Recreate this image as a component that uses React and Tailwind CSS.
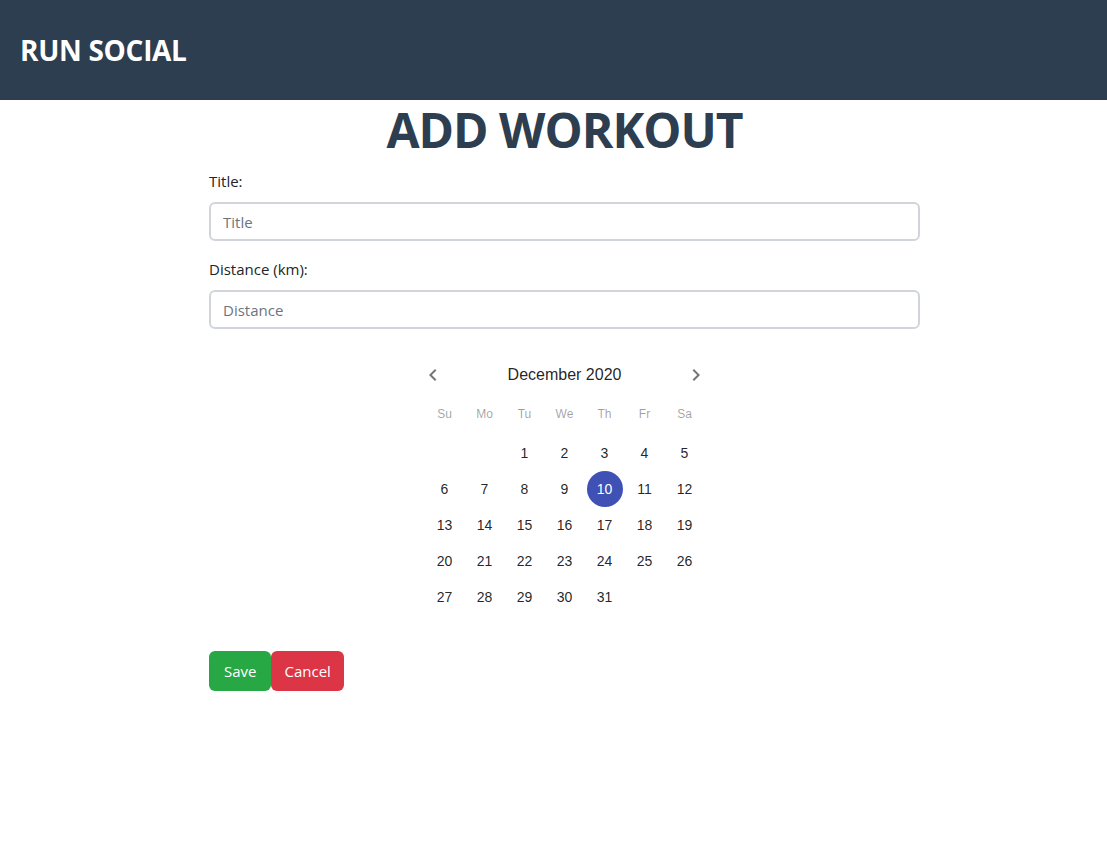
import React, { useState } from "react";

const days = ["Su", "Mo", "Tu", "We", "Th", "Fr", "Sa"];

// December 2020 starts on a Tuesday
const weeks = [
  [null, null, 1, 2, 3, 4, 5],
  [6, 7, 8, 9, 10, 11, 12],
  [13, 14, 15, 16, 17, 18, 19],
  [20, 21, 22, 23, 24, 25, 26],
  [27, 28, 29, 30, 31, null, null],
];

const Chevron = ({ dir }) => (
  <svg width="24" height="24" viewBox="0 0 24 24" fill="#757575">
    {dir === "left" ? (
      <path d="M15.41 16.59L10.83 12l4.58-4.59L14 6l-6 6 6 6 1.41-1.41z" />
    ) : (
      <path d="M8.59 16.59L13.17 12 8.59 7.41 10 6l6 6-6 6-1.41-1.41z" />
    )}
  </svg>
);

const App = () => {
  const [selected, setSelected] = useState(10);

  return (
    <div className="min-h-screen bg-white" style={{ fontFamily: '"Open Sans", "Noto Sans", sans-serif' }}>
      <header className="flex h-[100px] items-center bg-[#2c3e50] px-5">
        <h1 className="text-[28px] font-bold tracking-[-0.3px] text-white">RUN SOCIAL</h1>
      </header>

      <div className="ml-[209px] w-[711px]">
        <h2 className="mt-[2px] text-center text-[48px] font-bold leading-[56px] tracking-[-1px] text-[#2c3e50]">
          ADD WORKOUT
        </h2>

        <form className="mt-[13px]">
          <label className="block text-[15px] leading-[20px] text-[#212529]">Title:</label>
          <input
            type="text"
            placeholder="Title"
            className="mt-[11px] h-[39px] w-full rounded-[6px] border-2 border-[#d1d5db] px-3 text-[15px] text-[#212529] placeholder-[#6c757d] outline-none"
          />

          <label className="mt-[18px] block text-[15px] leading-[20px] text-[#212529]">Distance (km):</label>
          <input
            type="text"
            placeholder="Distance"
            className="mt-[11px] h-[39px] w-full rounded-[6px] border-2 border-[#d1d5db] px-3 text-[15px] text-[#212529] placeholder-[#6c757d] outline-none"
          />

          <div
            className="mx-auto mt-[28px] w-[295px] text-[rgba(0,0,0,0.87)]"
            style={{ fontFamily: '"Liberation Sans", Arial, sans-serif' }}
          >
            <div className="flex h-[36px] items-center justify-between">
              <button type="button" className="flex h-8 w-8 items-center justify-center">
                <Chevron dir="left" />
              </button>
              <span className="text-[16px]">December 2020</span>
              <button type="button" className="flex h-8 w-8 items-center justify-center">
                <Chevron dir="right" />
              </button>
            </div>

            <div className="mt-[13px] flex justify-center">
              {days.map((d) => (
                <span key={d} className="flex h-[16px] w-[40px] items-center justify-center text-[12px] text-[rgba(0,0,0,0.38)]">
                  {d}
                </span>
              ))}
            </div>

            <div className="mt-[13px] flex flex-col">
              {weeks.map((w, i) => (
                <div key={i} className="flex justify-center">
                  {w.map((n, j) => (
                    <div key={j} className="flex h-[36px] w-[40px] items-center justify-center">
                      {n && (
                        <button
                          type="button"
                          onClick={() => setSelected(n)}
                          className={
                            n === selected
                              ? "flex h-[36px] w-[36px] items-center justify-center rounded-full bg-[#3f51b5] text-[14px] font-medium text-white"
                              : "flex h-[36px] w-[36px] items-center justify-center rounded-full text-[14px] text-[rgba(0,0,0,0.87)]"
                          }
                        >
                          {n}
                        </button>
                      )}
                    </div>
                  ))}
                </div>
              ))}
            </div>
          </div>

          <div className="mt-[36px] flex">
            <button type="button" className="h-[40px] rounded-[6px] bg-[#28a745] px-[15px] text-[15px] text-white">
              Save
            </button>
            <button type="button" className="h-[40px] rounded-[6px] bg-[#dc3545] px-[13px] text-[15px] text-white">
              Cancel
            </button>
          </div>
        </form>
      </div>
    </div>
  );
};

export default App;
